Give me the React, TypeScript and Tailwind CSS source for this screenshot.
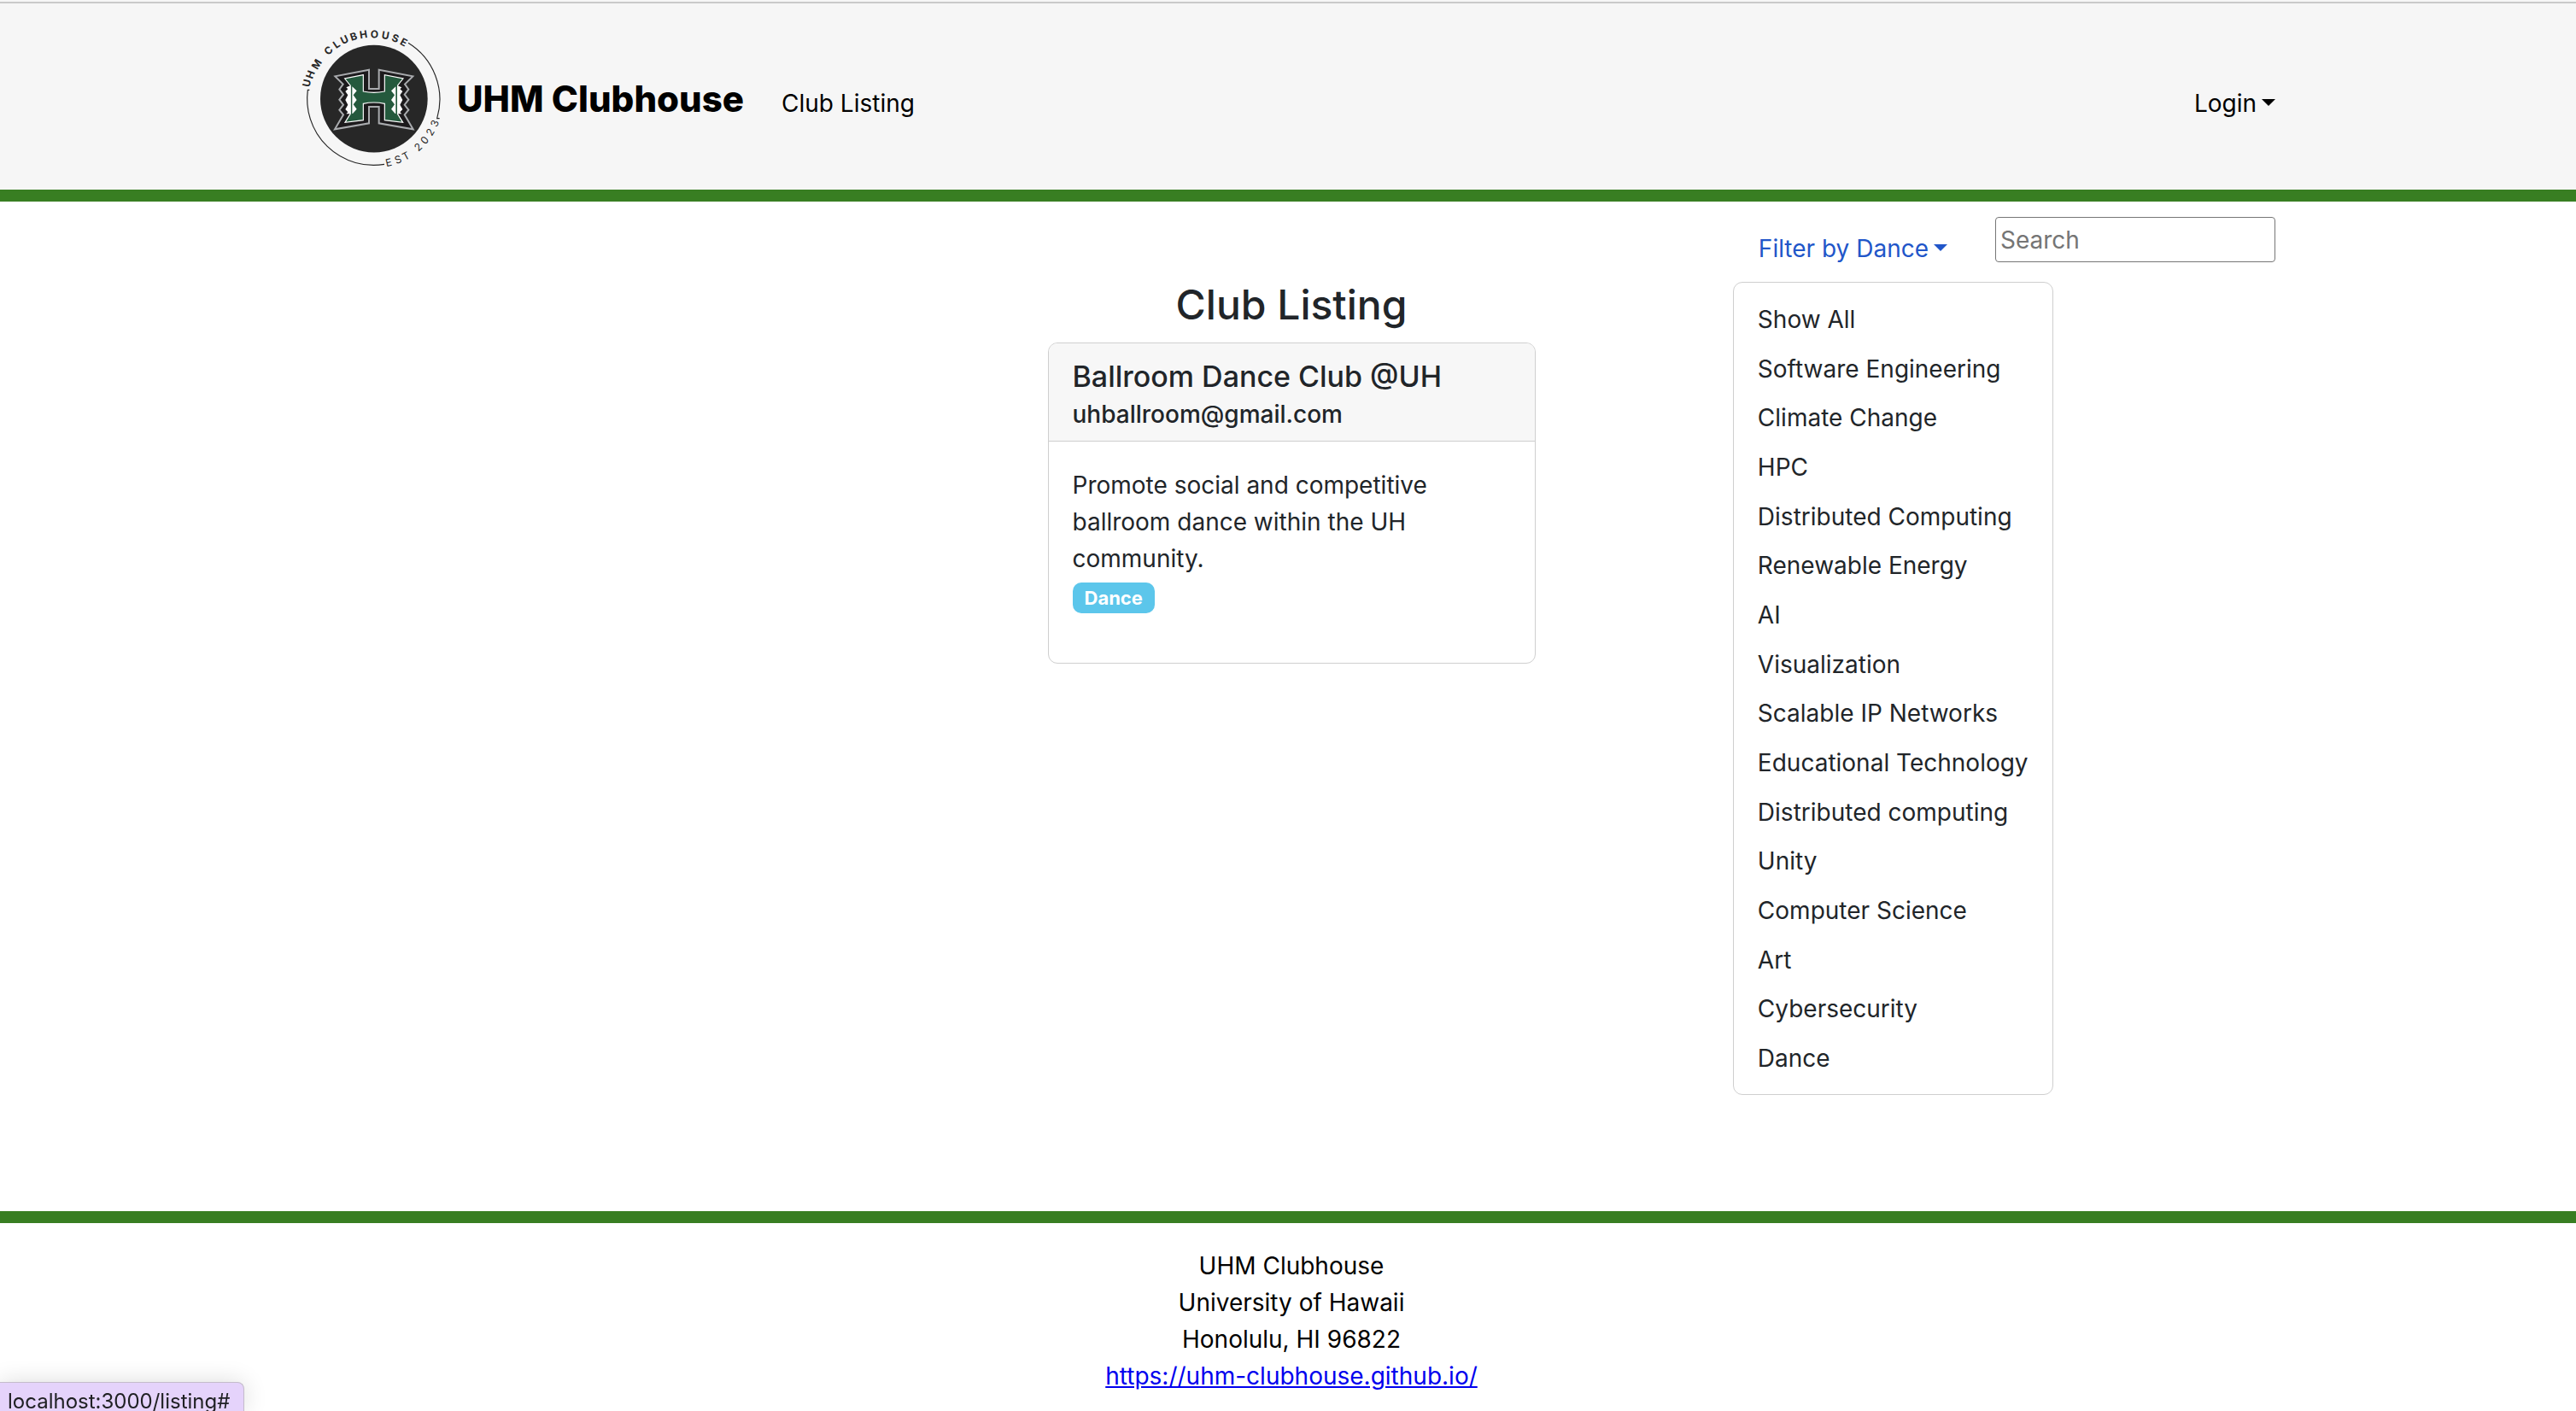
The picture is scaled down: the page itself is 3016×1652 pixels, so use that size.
import { useState } from "react";

const INTERESTS = [
  "Show All",
  "Software Engineering",
  "Climate Change",
  "HPC",
  "Distributed Computing",
  "Renewable Energy",
  "AI",
  "Visualization",
  "Scalable IP Networks",
  "Educational Technology",
  "Distributed computing",
  "Unity",
  "Computer Science",
  "Art",
  "Cybersecurity",
  "Dance",
];

// For each letter: angle of its centre on the badge ring in degrees, its width, and its baseline radius.
const TOP_TEXT = "UHMCLUBHOUSE";
const TOP_LETTERS: [number, number, number][] = [
  [-76.7, 27, 229], [-69, 28, 226], [-59, 33, 222], [-43.2, 27, 220], [-34.3, 21, 219], [-26.3, 27, 219],
  [-17.9, 24, 217], [-9, 28, 216], [0.5, 28, 214], [10.4, 27, 214], [19.6, 24, 213], [28, 22, 212],
];
const BOTTOM_TEXT = "EST2023";
const BOTTOM_LETTERS: [number, number, number][] = [
  [13, 20, 243], [21.5, 22, 243], [29.2, 22, 243], [42.5, 21, 243], [50.8, 22, 243], [59.3, 21, 243], [67.9, 21, 243],
];

const CX = 293;
const CY = 347;

function ringLetters(letters: [number, number, number][], below: boolean) {
  const placed = letters.map(([deg, width, radius]) => {
    const a = (deg * Math.PI) / 180;
    const side = below ? 1 : -1;
    return {
      x: CX + radius * Math.sin(a) - (width / 2) * Math.cos(a),
      y: CY + side * (radius * Math.cos(a) + (width / 2) * Math.sin(a)),
      r: -side * deg,
    };
  });
  return {
    x: placed.map((p) => p.x.toFixed(1)).join(" "),
    y: placed.map((p) => p.y.toFixed(1)).join(" "),
    rotate: placed.map((p) => p.r).join(" "),
  };
}

function HalfTeeth() {
  return (
    <>
      <path d="M77 90 L61 97 L67 103 L58 111 L67 124 L58 141 L67 158 L58 174 L67 184 L61 190 L77 190 Z" fill="#fff" />
      <path d="M82 94 L98 109 L86 124 L98 141 L86 157 L98 173 L84 189 L82 189 Z" fill="#fff" />
    </>
  );
}

function Logo() {
  return (
    <svg viewBox="36 96 498 498" className="size-[166px] shrink-0" role="img" aria-label="UHM Clubhouse, est 2023">
      <circle cx="293.5" cy="347" r="188.5" fill="#272727" />
      <g fill="none" stroke="#272727" strokeWidth="3.5">
        <path d="M414 151 A233 233 0 0 1 515 416 L524 416" />
        <path d="M330 577 A233 233 0 0 1 61 316 L67 316" />
      </g>
      <text {...ringLetters(TOP_LETTERS, false)} fill="#272727" fontFamily="Inter, sans-serif" fontWeight="700" fontSize="36">
        {TOP_TEXT}
      </text>
      <text {...ringLetters(BOTTOM_LETTERS, true)} fill="#272727" fontFamily="Inter, sans-serif" fontWeight="400" fontSize="36">
        {BOTTOM_TEXT}
      </text>
      <g transform="translate(135 210)">
        <path
          d="M141 35 L22 58 L50 86 L37 104 L51 122 L37 140 L51 158 L37 176 L51 193 L21 244 L141 223 L141 165 L176 165 L176 223 L296 244 L266 193 L280 176 L266 158 L280 140 L266 122 L280 104 L267 86 L295 58 L176 35 L176 102 L141 102 Z"
          fill="#1c1a1c"
          stroke="#a9abae"
          strokeWidth="6"
        />
        <path
          d="M121 53 L56 66 L77 92 L77 188 L57 220 L121 212 L121 154 Q158 146 196 154 L196 212 L260 220 L240 188 L240 92 L261 66 L196 53 L196 111 Q158 119 121 111 Z"
          fill="#24593d"
          stroke="#fff"
          strokeWidth="3.5"
        />
        <path d="M79.500 90 V190 M237.500 90 V190" stroke="#24593d" strokeWidth="5" />
        <HalfTeeth />
        <g transform="translate(317 0) scale(-1 1)">
          <HalfTeeth />
        </g>
      </g>
    </svg>
  );
}

function Caret() {
  return (
    <span
      aria-hidden="true"
      className="ml-1.5 inline-block border-x-8 border-t-8 border-b-0 border-x-transparent border-t-current align-[7px]"
    />
  );
}

export default function App() {
  const [filter, setFilter] = useState("Dance");
  const [open, setOpen] = useState(true);
  const [search, setSearch] = useState("");

  return (
    <div className="flex min-h-screen flex-col bg-white font-[Inter,sans-serif] text-[28px] leading-[43px] text-[#212529]">
      <header className="border-b-[14px] border-[#387e22] bg-[#f6f6f6] pt-0.5 text-black">
        <div className="border-t-2 border-[#c9c9c9]" />
        <div className="mx-auto flex w-full max-w-[2312px] items-center pt-7 pb-6">
          <Logo />
          <nav className="ml-[17px] flex flex-1 items-baseline pt-0.5">
            <a href="#" className="text-[42px] leading-[54px] font-extrabold">
              UHM Clubhouse
            </a>
            <a href="#listing" className="ml-11">
              Club Listing
            </a>
            <button type="button" className="ml-auto">
              Login
              <Caret />
            </button>
          </nav>
        </div>
      </header>

      <main className="flex-1">
        <div className="mx-auto w-full max-w-[2312px]">
          <div className="flex items-start justify-end gap-7 pt-[18px]">
            <div className="relative">
              <button
                type="button"
                aria-expanded={open}
                onClick={() => setOpen(!open)}
                className="pt-4 pr-7 pb-[14px] pl-[30px] text-[#2156c9]"
              >
                Filter by {filter}
                <Caret />
              </button>
              {open && (
                <ul className="absolute top-full left-0 mt-[3px] flex min-h-[952px] w-max flex-col justify-between rounded-[11px] border border-[#cfcfcf] bg-white py-[14px]">
                  {INTERESTS.map((name) => (
                    <li key={name}>
                      <button
                        type="button"
                        onClick={() => setFilter(name)}
                        className="block w-full px-7 pt-2 pb-1.5 text-left"
                      >
                        {name}
                      </button>
                    </li>
                  ))}
                </ul>
              )}
            </div>
            <input
              type="text"
              aria-label="Search"
              placeholder="Search"
              value={search}
              onChange={(e) => setSearch(e.target.value)}
              className="h-[53px] w-[328px] rounded-[4px] border border-[#767676] bg-white px-[5px] placeholder:text-[#757575]"
            />
          </div>

          <div className="pl-2">
            <h1 className="text-center text-[48px] leading-[60px] font-medium">Club Listing</h1>
            <article className="mx-auto mt-[14px] w-full max-w-[571px] overflow-hidden rounded-[11px] border border-[#cfcfcf]">
              <header className="border-b border-[#cfcfcf] bg-[#f7f7f7] px-7 pt-[15px] pb-[9px] font-medium">
                <h2 className="text-[34px] leading-[47px]">Ballroom Dance Club @UH</h2>
                <p>uhballroom@gmail.com</p>
              </header>
              <div className="px-7 pt-[30px] pb-[58px]">
                <p>Promote social and competitive ballroom dance within the UH community.</p>
                <span className="mt-1.5 block w-max rounded-[10px] bg-[#5cc6eb] px-[14px] text-[22px] leading-[36px] font-bold text-white">
                  Dance
                </span>
              </div>
            </article>
          </div>
        </div>
      </main>

      <footer className="border-t-[14px] border-[#387e22] pt-[29px] pb-[19px] text-center text-black">
        <div className="mx-auto w-full max-w-[2312px] pl-2">
          <p>UHM Clubhouse</p>
          <p>University of Hawaii</p>
          <p>Honolulu, HI 96822</p>
          <p>
            <a href="https://uhm-clubhouse.github.io/" className="text-[#0000ee] underline">
              https://uhm-clubhouse.github.io/
            </a>
          </p>
        </div>
      </footer>

      <div className="fixed bottom-0 left-0 h-[34px] rounded-tr-[8px] border-t border-r border-[#c4bccb] bg-[#e5d3fb] pr-4 pl-[9px] text-[24px] leading-[43px] text-[#202124] shadow-[0_0_28px_rgba(0,0,0,0.14)]">
        localhost:3000/listing#
      </div>
    </div>
  );
}
